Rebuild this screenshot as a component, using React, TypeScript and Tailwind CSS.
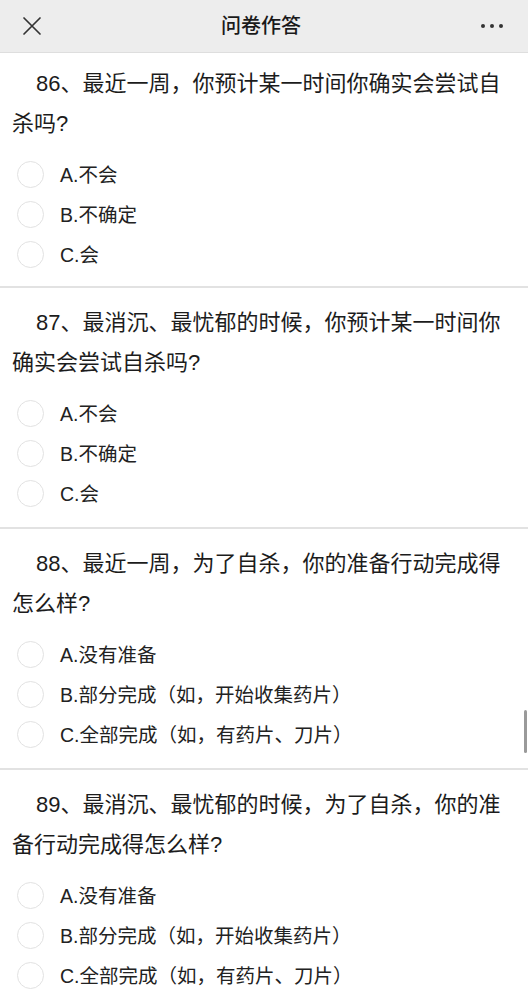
import React from "react";

type Q = { l1: string; l2: string; opts: string[] };

const questions: Q[] = [
  {
    l1: "86、最近一周，你预计某一时间你确实会尝试自",
    l2: "杀吗?",
    opts: ["A.不会", "B.不确定", "C.会"],
  },
  {
    l1: "87、最消沉、最忧郁的时候，你预计某一时间你",
    l2: "确实会尝试自杀吗?",
    opts: ["A.不会", "B.不确定", "C.会"],
  },
  {
    l1: "88、最近一周，为了自杀，你的准备行动完成得",
    l2: "怎么样?",
    opts: ["A.没有准备", "B.部分完成（如，开始收集药片）", "C.全部完成（如，有药片、刀片）"],
  },
  {
    l1: "89、最消沉、最忧郁的时候，为了自杀，你的准",
    l2: "备行动完成得怎么样?",
    opts: ["A.没有准备", "B.部分完成（如，开始收集药片）", "C.全部完成（如，有药片、刀片）"],
  },
];

function Section({ q, first }: { q: Q; first: boolean }) {
  return (
    <div
      className={`bg-white ${first ? "pt-[11px] pb-[12px]" : "pt-[15px] pb-[14px]"} border-b-2 border-[#e2e2e2]`}
    >
      <div className="pl-[12px] text-[22px] leading-[40px] text-[#1c1c1c] whitespace-nowrap">
        <div className="pl-[24px]">{q.l1}</div>
        <div>{q.l2}</div>
      </div>
      <div className="mt-[10px]">
        {q.opts.map((o) => (
          <div key={o} className="flex items-center h-[40px]">
            <div className="ml-[17px] w-[27px] h-[27px] rounded-full border-[1.5px] border-[#e2e2e2] shrink-0" />
            <span className="ml-[16px] text-[19.5px] leading-[24px] pt-[2px] text-[#222] whitespace-nowrap">{o}</span>
          </div>
        ))}
      </div>
    </div>
  );
}

export default function App() {
  return (
    <div
      className="relative w-[528px] h-[1000px] overflow-hidden bg-white"
      style={{ fontFamily: '"Liberation Sans", "Noto Sans CJK SC", sans-serif' }}
    >
      <div className="h-[53px] bg-[#ededed] border-b border-[#dedede] flex items-center justify-between">
        <div className="w-[64px] flex justify-center">
          <svg width="20" height="20" viewBox="0 0 20 20">
            <path d="M2 2 L18 18 M18 2 L2 18" stroke="#333" strokeWidth="1.7" strokeLinecap="round" />
          </svg>
        </div>
        <div className="text-[20px] font-medium text-[#1a1a1a] -ml-[6px]">问卷作答</div>
        <div className="w-[64px] flex justify-center gap-[5px] pr-[8px]">
          <span className="w-[4px] h-[4px] rounded-full bg-[#333]" />
          <span className="w-[4px] h-[4px] rounded-full bg-[#333]" />
          <span className="w-[4px] h-[4px] rounded-full bg-[#333]" />
        </div>
      </div>
      {questions.map((q, i) => (
        <Section key={i} q={q} first={i === 0} />
      ))}
      <div className="absolute right-[1px] top-[710px] w-[3px] h-[43px] rounded-full bg-[#9a9a9a]" />
    </div>
  );
}
